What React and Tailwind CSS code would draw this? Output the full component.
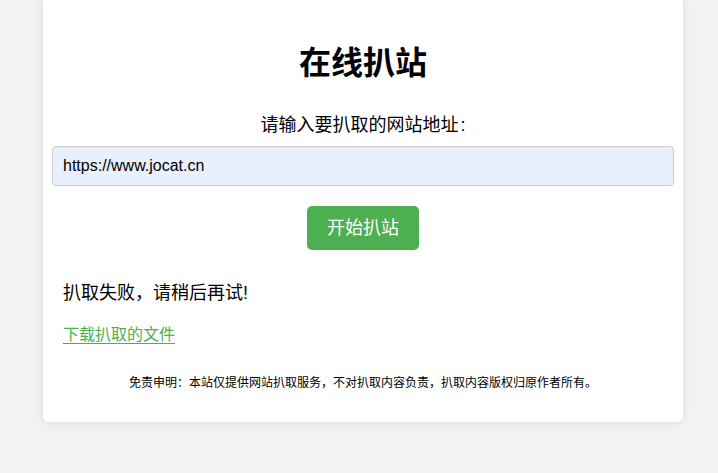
export default function App() {
  return (
    <div className="min-h-[473px] bg-[#f2f2f2] font-['Liberation_Sans','Noto_Sans_CJK_SC',sans-serif] text-black">
      <div className="ml-[43px] w-[640px] rounded-b-md bg-white px-[9px] pb-[30px] shadow-[0_0_10px_rgba(0,0,0,0.1)]">
        <h1 className="pt-[43px] text-center text-[32px] font-bold leading-[40px]">在线扒站</h1>
        <p className="mt-[30px] text-center text-[18px] leading-[24px]">请输入要扒取的网站地址<span className="ml-[2px]">:</span></p>
        <input
          type="text"
          defaultValue="https://www.jocat.cn"
          className="mt-[9px] block h-[40px] w-full rounded-[4px] border border-[#cccccc] bg-[#e8f0fe] px-[10px] text-[16px] text-black outline-none"
        />
        <div className="mt-[20px] flex justify-center">
          <button className="h-[44px] w-[112px] rounded-[5px] bg-[#4caf50] text-[18px] text-white">开始扒站</button>
        </div>
        <div className="px-[11px]">
          <p className="mt-[31px] text-[18px] leading-[24px]">扒取失败，请稍后再试!</p>
          <a href="#" className="mt-[19px] inline-block text-[16px] leading-[22px] text-[#4caf50] underline underline-offset-[3px]">
            下载扒取的文件
          </a>
          <p className="mt-[27px] text-center text-[12px] leading-[18px]">
            免责申明：本站仅提供网站扒取服务，不对扒取内容负责，扒取内容版权归原作者所有。
          </p>
        </div>
      </div>
    </div>
  );
}
